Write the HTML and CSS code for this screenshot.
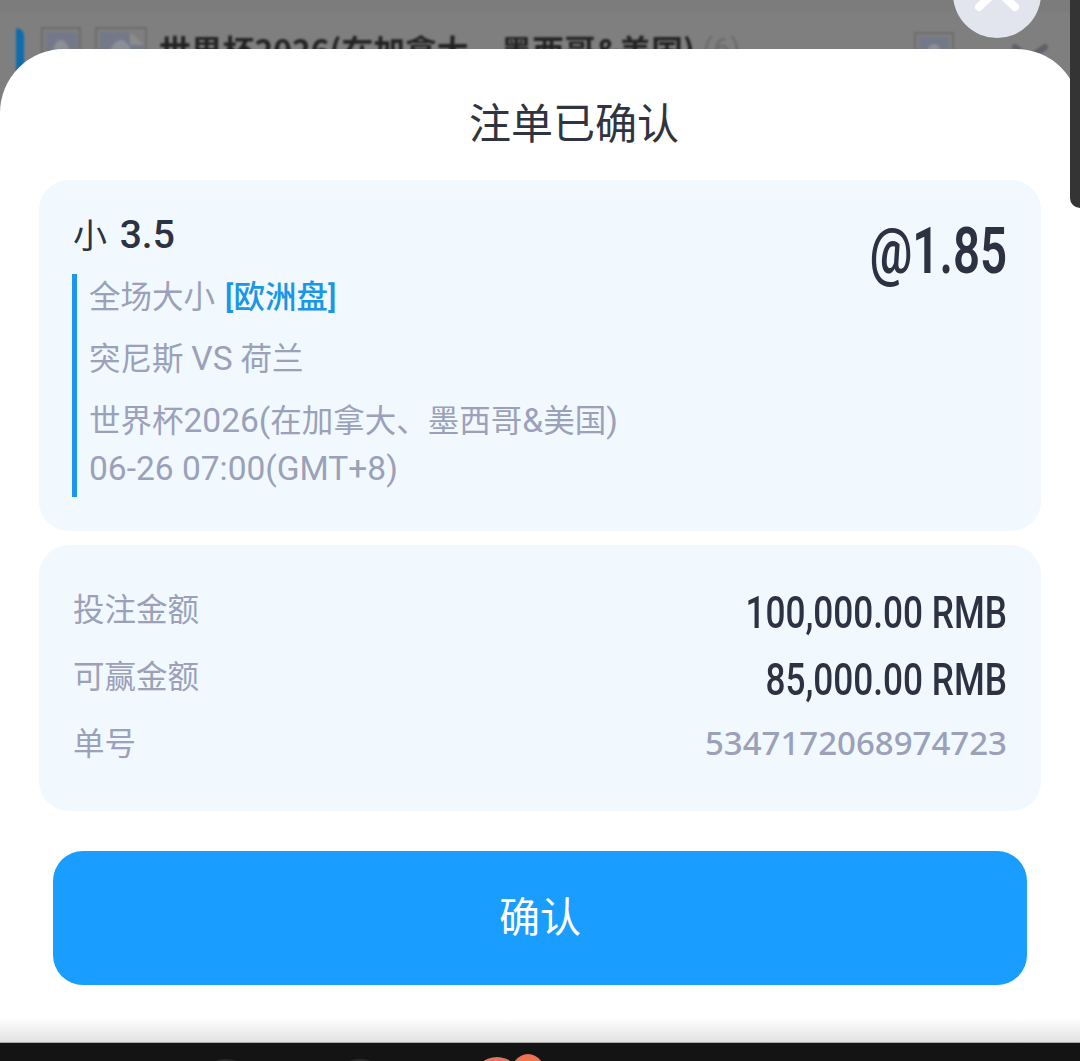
FILE: index.html
```html
<!DOCTYPE html>
<html lang="zh-CN">
<head>
    <meta charset="UTF-8">
    <meta name="viewport" content="width=device-width, initial-scale=1.0">
    <title>注单已确认</title>
    <link rel="stylesheet" href="styles.css">
</head>
<body>
    <div class="screen">
        <!-- dimmed list behind the sheet -->
        <div class="backdrop">
            <div class="league-row">
                <span class="league-tab"></span>
                <svg class="thumb" width="40" height="40" viewBox="0 0 40 40">
                    <path d="M1 1H39V39H1Z" fill="none" stroke="#6c6c6c" stroke-width="2"/>
                    <path d="M5 5H33L37 9V39H5Z" fill="#74798a"/>
                    <path d="M8 36C12 18 16 13 20 13S28 18 33 36Z" fill="#8d8f96"/>
                </svg>
                <svg class="thumb thumb-wide" width="52" height="40" viewBox="0 0 52 40">
                    <path d="M1 1H51V39H1Z" fill="none" stroke="#6c6c6c" stroke-width="2"/>
                    <path d="M5 5H35L49 18V39H5Z" fill="#74798a"/>
                    <path d="M35 5V18H49Z" fill="#8c8c8c"/>
                    <path d="M10 38C15 20 20 13 26 13S36 20 42 38Z" fill="#8d8f96"/>
                </svg>
                <span class="league-name">世界杯2026(在加拿大、墨西哥&amp;美国)</span>
                <span class="league-count">(6)</span>
                <svg class="thumb thumb-end" width="40" height="40" viewBox="0 0 40 40">
                    <path d="M1 1H39V39H1Z" fill="none" stroke="#6c6c6c" stroke-width="2"/>
                    <path d="M5 5H35V39H5Z" fill="#74798a"/>
                    <circle cx="20" cy="18" r="6" fill="#8d8f96"/>
                </svg>
                <svg class="chevron" width="36" height="20" viewBox="0 0 36 20">
                    <path d="M3 3L17 14L33 3" fill="none" stroke="#5f6068" stroke-width="6" stroke-linecap="round"/>
                </svg>
            </div>
        </div>

        <button class="close-btn" aria-label="关闭">
            <svg width="88" height="88" viewBox="0 0 88 88">
                <path d="M26 57L44 40L62 57" fill="none" stroke="#fff" stroke-width="8" stroke-linecap="round"/>
            </svg>
        </button>
        <div class="side-strip"></div>

        <div class="sheet">
            <h1 class="sheet-title">注单已确认</h1>

            <section class="card bet-card">
                <div class="bet-head">
                    <div class="bet-pick"><span class="bet-pick-cn">小</span> <span>3.5</span></div>
                    <div class="bet-odds">@1.85</div>
                </div>
                <div class="bet-info">
                    <p>全场大小 <strong class="bet-market">[欧洲盘]</strong></p>
                    <p>突尼斯 <span class="latin">VS</span> 荷兰</p>
                    <p>世界杯<span class="latin">2026(</span>在加拿大、墨西哥<span class="latin">&amp;</span>美国<span class="latin">)</span><br><span class="latin">06-26 07:00(GMT+8)</span></p>
                </div>
            </section>

            <section class="card stats-card">
                <div class="stat-row">
                    <span class="stat-label">投注金额</span>
                    <span class="stat-value">100,000.00 RMB</span>
                </div>
                <div class="stat-row">
                    <span class="stat-label">可赢金额</span>
                    <span class="stat-value">85,000.00 RMB</span>
                </div>
                <div class="stat-row">
                    <span class="stat-label">单号</span>
                    <span class="stat-serial">5347172068974723</span>
                </div>
            </section>

            <button class="confirm-btn">确认</button>
        </div>

        <div class="nav-bar">
            <svg width="1080" height="18" viewBox="0 0 1080 18">
                <ellipse cx="226" cy="24" rx="16" ry="8" fill="#2a2a2a"/>
                <ellipse cx="360" cy="24" rx="16" ry="8" fill="#2a2a2a"/>
                <ellipse cx="497" cy="34" rx="22" ry="20" fill="#e0775c"/>
                <ellipse cx="528" cy="33" rx="18" ry="22" fill="#f07350"/>
            </svg>
        </div>
    </div>
</body>
</html>
```

FILE: styles.css
```css
/* Reset */
body, h1, p {
    margin: 0;
    padding: 0;
}

body {
    background-color: #141414;
    font-family: Roboto, "Noto Sans CJK SC", sans-serif;
}

.screen {
    position: relative;
    height: 1061px;
    overflow: hidden;
}

/* Dimmed page behind the sheet, bleeds past the edges so the blur stays clean */
.backdrop {
    position: absolute;
    top: -4px;
    left: -4px;
    right: -4px;
    height: 124px;
    background-color: #7f7f7f;
    border-top: 16px solid #7c7c7c;
    filter: blur(0.8px);
}

.league-row {
    display: flex;
    align-items: flex-start;
    padding: 15px 36px 0 20px;
}

.league-tab {
    width: 8px;
    height: 60px;
    margin-top: 1px;
    margin-right: 17px;
    background-color: #0f6cad;
    border-radius: 8px 0 0 8px;
    transform: scaleX(-1);
}

.thumb-wide {
    margin-left: 14px;
}

.league-name {
    margin-left: 12px;
    font-family: "Noto Sans CJK SC", sans-serif;
    font-size: 31.8px;
    line-height: 44px;
    font-weight: 700;
    color: #232323;
}

.league-count {
    margin-left: 8px;
    font-size: 30px;
    line-height: 44px;
    color: #6b6b70;
}

.thumb-end {
    margin-left: auto;
    margin-top: 5px;
}

.chevron {
    margin-left: 58px;
    margin-top: 17px;
    flex-shrink: 0;
}

.close-btn {
    position: absolute;
    top: -50px;
    left: 953px;
    width: 88px;
    height: 88px;
    padding: 0;
    border: none;
    border-radius: 50%;
    background-color: #e2e5ed;
}

.close-btn svg {
    display: block;
}

.side-strip {
    position: absolute;
    top: 0;
    right: 0;
    width: 10px;
    height: 208px;
    background-color: #343434;
    border-bottom-left-radius: 10px;
    z-index: 2;
}

/* Bottom sheet */
.sheet {
    position: relative;
    display: flex;
    flex-direction: column;
    height: 994px;
    margin-top: 49px;
    box-sizing: border-box;
    background: linear-gradient(#fff calc(100% - 24px), #e2e2e2);
    border-bottom: 1px solid #a9a9a9;
    border-radius: 64px 64px 0 0;
}

.sheet-title {
    height: 131px;
    padding-left: 68px;
    font-size: 42px;
    font-weight: 400;
    line-height: 152px;
    text-align: center;
    color: #30343f;
}

.card {
    margin: 0 39px;
    background-color: #f1f8fe;
    border-radius: 30px;
}

/* Bet details */
.bet-card {
    height: 351px;
    box-sizing: border-box;
    padding: 28px 34px 0;
}

.bet-head {
    display: flex;
    justify-content: space-between;
    height: 66px;
}

.bet-pick {
    font-size: 39px;
    line-height: 54px;
    font-weight: 500;
    color: #2c3242;
}

.bet-pick-cn {
    margin-right: 3px;
    font-size: 34px;
    font-weight: 400;
}

.bet-odds {
    font-size: 65px;
    font-weight: 600;
    line-height: 86px;
    color: #2c3242;
    transform: scaleX(0.73);
    transform-origin: right center;
}

.bet-info {
    display: flex;
    flex-direction: column;
    gap: 14px;
    padding: 0 0 3px 12px;
    border-left: 5px solid #1e96ef;
    margin-left: -1px;
    font-size: 31.5px;
    line-height: 48px;
    color: #9aa1b8;
}

.latin {
    font-size: 33.5px;
    line-height: 1;
}

.bet-market {
    margin-left: 2px;
    font-weight: 500;
    color: #1a96e6;
}

/* Amounts */
.stats-card {
    height: 266px;
    box-sizing: border-box;
    margin-top: 14px;
    padding: 35px 34px 0;
}

.stat-row {
    display: flex;
    justify-content: space-between;
    align-items: flex-start;
    height: 67px;
}

.stat-label {
    font-size: 31.5px;
    line-height: 62px;
    color: #9aa1b8;
}

.stat-value {
    font-size: 44px;
    font-weight: 500;
    line-height: 67px;
    color: #2c3242;
    transform: scaleX(0.8);
    transform-origin: right center;
}

.stat-serial {
    font-family: "Noto Sans", sans-serif;
    font-size: 33px;
    font-weight: 500;
    line-height: 58px;
    color: #9aa1b8;
}

.confirm-btn {
    height: 134px;
    margin: 40px 53px 0;
    padding: 0 0 8px;
    border: none;
    border-radius: 30px;
    background-color: #199dff;
    font-family: inherit;
    font-size: 41px;
    color: #fff;
}

.nav-bar {
    height: 18px;
}

.nav-bar svg {
    display: block;
}
```
